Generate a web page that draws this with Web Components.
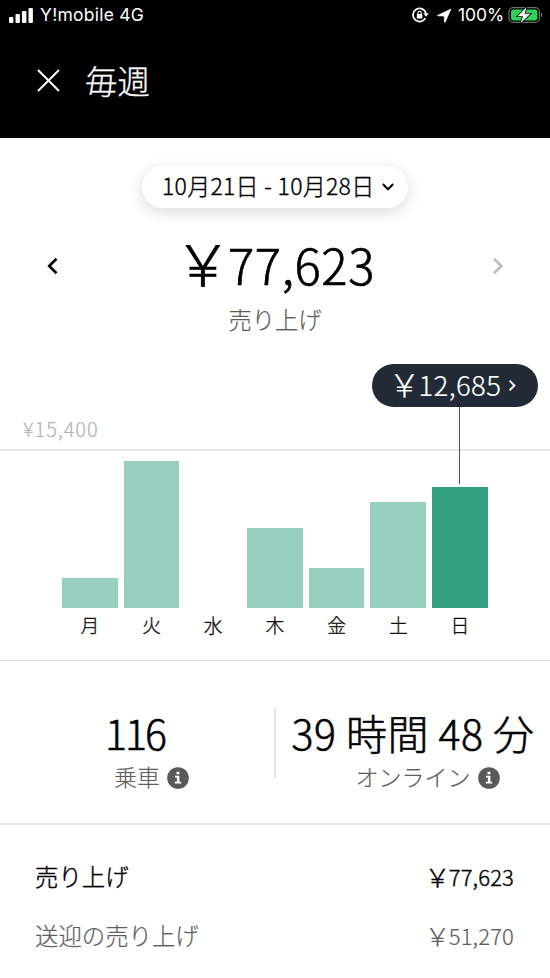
<!DOCTYPE html>
<html lang="ja">
<head>
<meta charset="utf-8">
<title>毎週</title>
<style>
  html, body { margin: 0; background: #fff; }
  body { font-family: "Noto Sans CJK JP", sans-serif; font-weight: 300; color: #000; width: 550px; height: 978px; overflow: hidden; }
</style>
</head>
<body>
<earnings-app></earnings-app>
<script>
const define = (name, html) => {
  const template = document.createElement('template');
  template.innerHTML = html;
  customElements.define(name, class extends HTMLElement {
    constructor() {
      super();
      this.attachShadow({ mode: 'open' }).append(template.content.cloneNode(true));
    }
  });
};

define('yen-sign', `
<style>
  :host { display: inline-block; width: 1em; line-height: 0; }
  span { display: inline-block; font-size: 1.16em; line-height: 0; margin: 0 -.08em 0 -.08em; letter-spacing: 0; vertical-align: -.025em; }
</style>
<span><slot></slot></span>
`);

define('status-bar', `
<style>
  :host { display: flex; align-items: center; height: 30px; box-sizing: border-box; background: #000; color: #fff;
    font: 400 17.5px/30px Inter, sans-serif; padding: 0 7px 0 9px; white-space: pre; }
  .carrier { margin-left: 6px; letter-spacing: .25px; flex: 1; }
  svg { display: block; flex: none; }
  .lock { margin-right: 8px; } .loc { margin-right: 6px; } .pct { margin-right: 4px; letter-spacing: -.1px; }
</style>
<svg width="25" height="16" viewBox="0 0 25 16" fill="#fff"><rect y="10" width="4.4" height="6" rx="1"/><rect x="6.5" y="7" width="4.4" height="9" rx="1"/><rect x="13" y="4" width="4.4" height="12" rx="1"/><rect x="19.5" y="1" width="4.4" height="15" rx="1"/></svg>
<span class="carrier">Y!mobile 4G</span>
<svg class="lock" width="17" height="16" viewBox="0 0 17 16"><path d="M13.4 11.2A6.6 6.6 0 1 1 14 6.3" fill="none" stroke="#fff" stroke-width="1.7"/><path d="M11.2 6.2h5.6L14 9.8z" fill="#fff"/><rect x="4.8" y="7" width="5.6" height="4.6" rx=".7" fill="#fff"/><path d="M6 7.5V5.8a1.6 1.6 0 0 1 3.2 0v1.7" fill="none" stroke="#fff" stroke-width="1.1"/></svg>
<svg class="loc" width="15" height="15" viewBox="0 0 15 15"><path d="M14 1 .8 7.2q-.5.5.3.7l6.1.2.2 6.1q.3.7.8 0z" fill="#fff" stroke="#fff" stroke-width=".6" stroke-linejoin="round"/></svg>
<span class="pct">100%</span>
<svg width="35" height="18" viewBox="0 0 35 18"><rect x="1" y="1.6" width="30.4" height="14.8" rx="4.4" fill="none" stroke="#6b6b6b" stroke-width="1.3"/><rect x="3" y="3.6" width="26.4" height="10.8" rx="2.6" fill="#30d158"/><path d="M33 6.5q2.2 2.5 0 5z" fill="#777"/><path d="M18.4 1.2 9.6 10.2h5.5l-2.6 7L22.4 7.7h-5.7z" fill="#fff" stroke="#000" stroke-width="1.6" paint-order="stroke"/></svg>
`);

define('title-bar', `
<style>
  :host { display: flex; align-items: flex-start; height: 108px; box-sizing: border-box; padding: 26px 0 0 36px; background: #000; color: #fff; }
  svg { margin: 12px 24px 0 0; }
  h1 { margin: 0; font-weight: 300; font-size: 32.4px; line-height: 48px; -webkit-text-stroke: .3px; }
</style>
<svg width="25" height="25" viewBox="0 0 25 25" fill="none" stroke="#fff" stroke-width="2"><path d="M2 2 23 23M23 2 2 23"/></svg>
<h1><slot></slot></h1>
`);

define('date-pill', `
<style>
  :host { display: flex; align-items: center; box-sizing: border-box; width: 266px; height: 42px; border-radius: 21px; background: #fff; padding-left: 20px;
    box-shadow: 0 4px 16px rgba(0,0,0,.15); font-size: 23px; line-height: 42px; white-space: nowrap; -webkit-text-stroke: .35px; }
  span { letter-spacing: .28px; margin-top: -4px; }
  svg { margin-left: 7px; }
</style>
<span><slot></slot></span>
<svg width="14" height="10" viewBox="0 0 14 10" fill="none" stroke="#000" stroke-width="2"><path d="M1.8 2 7 7.3 12.2 2"/></svg>
`);

define('week-summary', `
<style>
  :host { display: flex; flex-direction: column; align-items: center; height: 217px; box-sizing: border-box; padding-top: 28px; }
  .row { display: flex; align-items: center; justify-content: space-between; width: 100%; box-sizing: border-box; padding: 0 46px; height: 70px; margin-top: 20px; }
  .amount { font-size: 49px; line-height: 70px; letter-spacing: .6px; -webkit-text-stroke: .7px; margin-top: 1px; padding-left: 4px; }
  .cap { font-size: 23.3px; line-height: 34px; color: #5e5e5e; margin-top: 4px; -webkit-text-stroke: .2px; }
  svg { margin-top: 5px; }
</style>
<slot name="range"></slot>
<div class="row">
  <svg width="13" height="18" viewBox="0 0 13 18" fill="none" stroke="#000" stroke-width="2.6"><path d="M10.5 1.8 3.2 9l7.3 7.2"/></svg>
  <span class="amount"><slot name="amount"></slot></span>
  <svg width="13" height="18" viewBox="0 0 13 18" fill="none" stroke="#bdbdbd" stroke-width="2.6"><path d="M3 1.8 10.3 9 3 16.2"/></svg>
</div>
<div class="cap"><slot></slot></div>
`);

define('day-bar', `
<style>
  :host { display: flex; flex-direction: column; align-items: stretch; justify-content: flex-end; }
  i { display: block; height: var(--h, 0); background: var(--bar, #97cfbe); }
  b { display: block; font-weight: 300; -webkit-text-stroke: .35px; font-size: 18.8px; line-height: 28px; text-align: center; color: #111; margin-top: 3px; height: 28px; }
</style>
<i></i><b><slot></slot></b>
`);

define('value-tip', `
<style>
  :host { display: flex; align-items: center; box-sizing: border-box; width: 166px; height: 43px; border-radius: 22px; background: #222b35; color: #fff; font-size: 27.5px; line-height: 43px; padding-left: 19px; white-space: nowrap; }
  span { margin-top: -2px; letter-spacing: .4px; -webkit-text-stroke: .2px; }
  svg { margin-left: 7px; }
</style>
<span><slot></slot></span>
<svg width="9" height="13" viewBox="0 0 9 13" fill="none" stroke="#fff" stroke-width="1.9"><path d="M1.6 1.7 6.4 6.5 1.6 11.3"/></svg>
`);

define('week-chart', `
<style>
  :host { display: block; position: relative; height: 306px; box-sizing: border-box; border-bottom: 1px solid #dcdcdc; padding-top: 59px; }
  .max { font-size: 20px; line-height: 30px; color: #b4b4b4; padding-left: 23px; height: 35px; letter-spacing: .9px; border-bottom: 2px solid #e6e6e6; -webkit-text-stroke: .2px; }
  .bars { display: grid; grid-template-columns: repeat(7, 55.7px); column-gap: 6px; padding-left: 62px; height: 188px; }
  .stem { position: absolute; left: 459px; top: 50px; width: 1px; height: 79px; background: #4a4f54; }
  .tip { position: absolute; left: 372px; top: 9px; }
</style>
<div class="max"><slot name="max"></slot></div>
<div class="bars"><slot></slot></div>
<div class="stem"></div>
<div class="tip"><slot name="tip"></slot></div>
`);

define('info-dot', `
<style>:host { display: block; width: 22px; height: 22px; } svg { display: block; }</style>
<svg width="22" height="22" viewBox="0 0 22 22"><circle cx="11" cy="11" r="10.8" fill="#595959"/><path d="M9.5 4.8h2.9v2.4H9.5zM8 8.7h4.4v6h1.8v1.9H7.8v-1.9h2.1v-4.1H8z" fill="#fff"/></svg>
`);

define('stat-cell', `
<style>
  :host { display: flex; flex-direction: column; align-items: center; box-sizing: border-box; height: 163px; padding-top: 41px; white-space: nowrap; }
  .v { font-size: 41px; line-height: 60px; letter-spacing: var(--track, 0); -webkit-text-stroke: .55px; margin-left: var(--nudge, 0); }
  .l { display: flex; align-items: center; gap: 7px; font-size: 23px; line-height: 34px; color: #5e5e5e; margin: -3px -29px 0 0; -webkit-text-stroke: .2px; }
  info-dot { margin-top: 3px; }
</style>
<div class="v"><slot name="value"></slot></div>
<div class="l"><slot></slot><info-dot></info-dot></div>
`);

define('stat-pair', `
<style>
  :host { display: grid; grid-template-columns: 274px 2px 274px; align-items: start; height: 164px; box-sizing: border-box; border-bottom: 2px solid #e6e6e6; }
  i { height: 70px; margin-top: 47px; background: #e4e4e4; }
</style>
<slot name="a"></slot><i></i><slot name="b"></slot>
`);

define('money-row', `
<style>
  :host { display: flex; justify-content: space-between; padding: 0 36px 0 35px; height: 59px; font-size: 23.4px; line-height: 34px; -webkit-text-stroke: var(--ink, .2px); }
  .n { font-size: 22px; letter-spacing: .15px; }
</style>
<span><slot></slot></span><span class="n"><slot name="n"></slot></span>
`);

define('earnings-app', `
<style>
  :host { display: block; width: 550px; }
  .list { padding-top: 34px; }
  .main { --ink: .4px; } .sub { color: #5e5e5e; }
</style>
<status-bar></status-bar>
<title-bar>毎週</title-bar>
<week-summary>
  <date-pill slot="range">10月21日 - 10月28日</date-pill>
  <span slot="amount"><yen-sign>￥</yen-sign>77,623</span>売り上げ
</week-summary>
<week-chart>
  <span slot="max">¥15,400</span>
  <day-bar style="--h:30px">月</day-bar><day-bar style="--h:147px">火</day-bar><day-bar>水</day-bar><day-bar style="--h:80px">木</day-bar><day-bar style="--h:40px">金</day-bar><day-bar style="--h:106px">土</day-bar><day-bar style="--h:121px;--bar:#319f7e">日</day-bar>
  <value-tip slot="tip"><yen-sign>￥</yen-sign>12,685</value-tip>
</week-chart>
<stat-pair>
  <stat-cell slot="a" style="--track:-2px;--nudge:-4px"><span slot="value">116</span>乗車</stat-cell>
  <stat-cell slot="b" style="--track:.5px"><span slot="value">39 時間 48 分</span>オンライン</stat-cell>
</stat-pair>
<div class="list">
  <money-row class="main">売り上げ<span slot="n"><yen-sign>￥</yen-sign>77,623</span></money-row>
  <money-row class="sub">送迎の売り上げ<span slot="n"><yen-sign>￥</yen-sign>51,270</span></money-row>
</div>
`);
</script>
</body>
</html>
